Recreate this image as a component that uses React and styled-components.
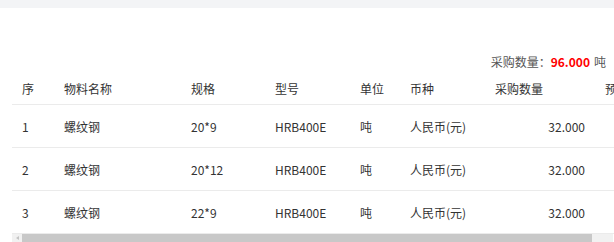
import { createGlobalStyle } from "styled-components";
import styled from "styled-components";

const GlobalStyle = createGlobalStyle`
  html, body {
    margin: 0;
    padding: 0;
    background: #fff;
    overflow: hidden;
  }
  body {
    font-family: "Microsoft YaHei", "Noto Sans CJK SC", "Noto Sans", sans-serif;
    font-size: 12px;
    color: #333;
  }
`;

const TopBand = styled.div`
  height: 8px;
  background: #f3f4f6;
`;

const Panel = styled.div`
  padding: 43px 0 0 12px;
`;

const Summary = styled.div`
  display: flex;
  justify-content: flex-end;
  align-items: center;
  height: 20px;
  padding-right: 8px;
  margin-bottom: 2px;
  color: #555;
  white-space: nowrap;
`;

const Qty = styled.b`
  color: #f00;
  font-weight: bold;
  margin-right: 4px;
`;

const TableBox = styled.div`
  overflow: hidden;
`;

const Table = styled.table`
  width: 615px;
  table-layout: fixed;
  border-collapse: collapse;
`;

const Th = styled.th`
  height: 31px;
  padding: 0 10px;
  font-weight: normal;
  text-align: ${(p) => (p.right ? "right" : "left")};
  color: #333;
  white-space: nowrap;
  overflow: hidden;
  border-bottom: 1px solid #ebebeb;
`;

const Td = styled.td`
  height: 42px;
  padding: 0 10px;
  text-align: ${(p) => (p.right ? "right" : "left")};
  color: #333;
  white-space: nowrap;
  overflow: hidden;
  border-bottom: 1px solid #ebebeb;
`;

// headless page hides native scrollbars, so the horizontal bar is drawn
const ScrollBar = styled.div`
  display: flex;
  height: 8px;
  margin-right: 1px;
  background: #f1f1f1;
`;

const ScrollArrow = styled.div`
  width: 10px;
  display: flex;
  align-items: center;
  justify-content: center;

  &::before {
    content: "";
    border-top: 2px solid transparent;
    border-bottom: 2px solid transparent;
    border-right: 3px solid #c4c4c4;
  }
`;

const ScrollThumb = styled.div`
  width: 570px;
  background: #c8c8c8;
`;

const columns = [
  { title: "序", width: 42 },
  { title: "物料名称", width: 127 },
  { title: "规格", width: 84 },
  { title: "型号", width: 85 },
  { title: "单位", width: 50 },
  { title: "币种", width: 85 },
  { title: "采购数量", width: 110 },
  { title: "预计单价", width: 32 },
];

const rows = [
  { no: 1, name: "螺纹钢", spec: "20*9", model: "HRB400E", unit: "吨", cur: "人民币(元)", qty: "32.000" },
  { no: 2, name: "螺纹钢", spec: "20*12", model: "HRB400E", unit: "吨", cur: "人民币(元)", qty: "32.000" },
  { no: 3, name: "螺纹钢", spec: "22*9", model: "HRB400E", unit: "吨", cur: "人民币(元)", qty: "32.000" },
];

function App() {
  return (
    <>
      <GlobalStyle />
      <TopBand />
      <Panel>
        <Summary>
          采购数量：<Qty>96.000</Qty>吨
        </Summary>
        <TableBox>
          <Table>
            <colgroup>
              {columns.map((c, index) => (
                <col key={index} style={{ width: c.width }} />
              ))}
            </colgroup>
            <thead>
              <tr>
                {columns.map((c, index) => (
                  <Th key={index}>{c.title}</Th>
                ))}
              </tr>
            </thead>
            <tbody>
              {rows.map((r) => (
                <tr key={r.no}>
                  <Td>{r.no}</Td>
                  <Td>{r.name}</Td>
                  <Td>{r.spec}</Td>
                  <Td>{r.model}</Td>
                  <Td>{r.unit}</Td>
                  <Td>{r.cur}</Td>
                  <Td right>{r.qty}</Td>
                  <Td></Td>
                </tr>
              ))}
            </tbody>
          </Table>
        </TableBox>
        <ScrollBar>
          <ScrollArrow />
          <ScrollThumb />
        </ScrollBar>
      </Panel>
    </>
  );
}

export default App;
